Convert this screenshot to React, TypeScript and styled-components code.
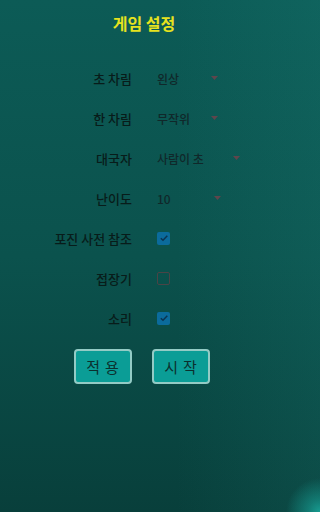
import React, { useState } from 'react'
import styled, { createGlobalStyle } from 'styled-components'

const GlobalStyle = createGlobalStyle`
  html, body {
    margin: 0;
    padding: 0;
    height: 100%;
  }
  body {
    font-family: "Noto Sans CJK KR", Roboto, "Noto Sans", sans-serif;
    overflow: hidden;
    background: #083f3b;
  }
`

const Screen = styled.div`
  width: 100vw;
  min-width: 288px;
  height: 100vh;
  min-height: 512px;
  background:
    radial-gradient(circle at 100% 100%, #179d92 0, rgba(22, 154, 144, 0.6) 12px, rgba(22, 154, 144, 0) 34px),
    linear-gradient(to right, rgba(255, 255, 255, 0) 55%, rgba(40, 160, 150, 0.12) 100%),
    linear-gradient(to bottom, #0c5b56 0%, #0b524d 50%, #083f3b 100%);
`

const Column = styled.div`
  width: 288px;
  display: flex;
  flex-direction: column;
  align-items: center;
`

const Title = styled.h1`
  margin: 12px 0 0 0;
  font-size: 16px;
  line-height: 22px;
  font-weight: 700;
  color: #e6e21e;
  text-align: center;
`

const Form = styled.div`
  margin-top: 24px;
  width: 100%;
  display: grid;
  grid-template-columns: 132px 1fr;
  column-gap: 25px;
  grid-auto-rows: 40px;
`

const Label = styled.div`
  display: flex;
  align-items: center;
  justify-content: flex-end;
  font-size: 13px;
  font-weight: 500;
  color: #081c1a;
  white-space: nowrap;
`

const Cell = styled.div`
  display: flex;
  align-items: center;
`

const SelectBox = styled.div<{ $width: number }>`
  position: relative;
  width: ${p => p.$width}px;
  display: flex;
  align-items: center;
`

const NativeSelect = styled.select`
  appearance: none;
  -webkit-appearance: none;
  width: 100%;
  border: 0;
  outline: 0;
  background: transparent;
  padding: 0;
  font-family: "Noto Sans CJK KR", Roboto, sans-serif;
  font-size: 12px;
  font-weight: 500;
  color: #10282a;
  cursor: pointer;
`

const Arrow = styled.svg`
  position: absolute;
  right: 0;
  top: 50%;
  margin-top: -2px;
  pointer-events: none;
`

const Check = styled.button<{ $on: boolean }>`
  width: 13px;
  height: 13px;
  padding: 0;
  box-sizing: border-box;
  border-radius: 2px;
  border: ${p => (p.$on ? '0' : '1.5px solid #4a4446')};
  background: ${p => (p.$on ? '#0b6b9c' : 'transparent')};
  display: flex;
  align-items: center;
  justify-content: center;
  cursor: pointer;
`

const Buttons = styled.div`
  margin-top: 11px;
  display: flex;
  gap: 20px;
  padding-right: 5px;
`

const ActionButton = styled.button`
  width: 58px;
  height: 35px;
  box-sizing: border-box;
  border: 2px solid #93cbc5;
  border-radius: 4px;
  background: #0b9d96;
  color: #0b302e;
  font-family: "Noto Sans CJK KR", Roboto, sans-serif;
  font-size: 15px;
  letter-spacing: 5px;
  padding: 0 0 0 5px;
  cursor: pointer;
`

type SelectProps = {
  width: number
  options: string[]
}

function Select({ width, options }: SelectProps) {
  return (
    <SelectBox $width={width}>
      <NativeSelect defaultValue={options[0]}>
        {options.map(o => <option key={o}>{o}</option>)}
      </NativeSelect>
      <Arrow width="7" height="4" viewBox="0 0 7 4">
        <path d="M0 0 L7 0 L3.5 4 Z" fill="#5e464c" />
      </Arrow>
    </SelectBox>
  )
}

function Checkbox({ initial }: { initial: boolean }) {
  const [on, setOn] = useState(initial)
  return (
    <Check $on={on} onClick={() => setOn(!on)}>
      {on && (
        <svg width="10" height="10" viewBox="0 0 10 10">
          <path d="M1.8 5.2 L4 7.3 L8.3 2.8" stroke="#0b3450" strokeWidth="1.5" fill="none" />
        </svg>
      )}
    </Check>
  )
}

export default function App() {
  return (
    <Screen>
      <GlobalStyle />
      <Column>
        <Title>게임 설정</Title>
        <Form>
          <Label>초 차림</Label>
          <Cell><Select width={61} options={['왼상', '오른상', '안상', '바깥상', '무작위']} /></Cell>
          <Label>한 차림</Label>
          <Cell><Select width={61} options={['무작위', '왼상', '오른상', '안상', '바깥상']} /></Cell>
          <Label>대국자</Label>
          <Cell><Select width={83} options={['사람이 초', '사람이 한', '사람 대 사람']} /></Cell>
          <Label>난이도</Label>
          <Cell><Select width={64} options={['10', '9', '8', '7', '6', '5', '4', '3', '2', '1']} /></Cell>
          <Label>포진 사전 참조</Label>
          <Cell><Checkbox initial={true} /></Cell>
          <Label>접장기</Label>
          <Cell><Checkbox initial={false} /></Cell>
          <Label>소리</Label>
          <Cell><Checkbox initial={true} /></Cell>
        </Form>
        <Buttons>
          <ActionButton>적용</ActionButton>
          <ActionButton>시작</ActionButton>
        </Buttons>
      </Column>
    </Screen>
  )
}
